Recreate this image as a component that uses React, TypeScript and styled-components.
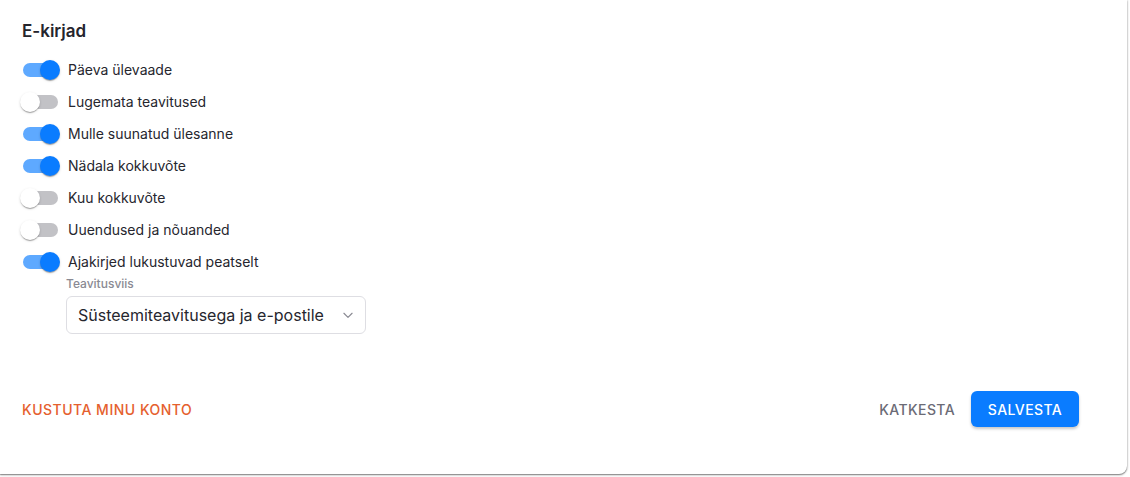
import React, { useState } from "react";
import styled, { createGlobalStyle } from "styled-components";

const Global = createGlobalStyle`
  html, body { margin: 0; padding: 0; background: #ffffff; }
  body { font-family: Inter, "Noto Sans", sans-serif; color: #26262e; }
  * { box-sizing: border-box; }
`;

const Page = styled.div`
  height: 477px;
  background: #ffffff;
`;

const Card = styled.div`
  width: 1127px;
  height: 474px;
  background: #fff;
  border-bottom-right-radius: 8px;
  box-shadow: 0 1px 1px rgba(0,0,0,0.35), 0 2px 2px rgba(0,0,0,0.12), 1px 0 2px rgba(0,0,0,0.14);
  padding: 21px 22px 0 22px;
  display: flex;
  flex-direction: column;
`;

const Title = styled.h2`
  margin: 0;
  font-size: 17px;
  font-weight: 600;
  line-height: 20px;
  color: #25252d;
`;

const List = styled.div`
  margin-top: 13px;
  display: flex;
  flex-direction: column;
`;

const Row = styled.label`
  height: 32px;
  display: flex;
  align-items: center;
  gap: 8px;
  cursor: pointer;
`;

const SwitchBox = styled.span`
  position: relative;
  width: 40px;
  height: 20px;
  flex: none;
  margin-left: -2px;
`;

const Track = styled.span<{ $on: boolean }>`
  position: absolute;
  left: 3px;
  top: 3px;
  width: 35px;
  height: 14px;
  border-radius: 7px;
  background: ${(p) => (p.$on ? "#5ea9ff" : "#c2c2c6")};
`;

const Thumb = styled.span<{ $on: boolean }>`
  position: absolute;
  top: 0;
  left: ${(p) => (p.$on ? "20px" : "0px")};
  width: 20px;
  height: 20px;
  border-radius: 50%;
  background: ${(p) => (p.$on ? "#0a7cff" : "#ffffff")};
  box-shadow: 0 2px 1px -1px rgba(0,0,0,0.2), 0 1px 1px 0 rgba(0,0,0,0.14), 0 1px 3px 0 rgba(0,0,0,0.12);
`;

const Label = styled.span`
  font-size: 14px;
  line-height: 20px;
  color: #26262e;
`;

const Field = styled.div`
  margin-left: 44px;
  margin-top: -1px;
  display: flex;
  flex-direction: column;
  width: 300px;
`;

const FieldLabel = styled.span`
  font-size: 12px;
  font-weight: 500;
  color: #8a8a93;
  line-height: 14px;
  margin-bottom: 5px;
`;

const Select = styled.div`
  height: 38px;
  border: 1px solid #dedee3;
  border-radius: 6px;
  display: flex;
  align-items: center;
  justify-content: space-between;
  padding: 0 10px 0 11px;
  font-size: 16px;
  color: #26262e;
`;

const Footer = styled.div`
  margin-top: 57px;
  display: flex;
  align-items: center;
  justify-content: space-between;
  padding-right: 26px;
`;

const DangerButton = styled.button`
  background: none;
  border: none;
  padding: 0;
  font-family: inherit;
  font-size: 14px;
  font-weight: 500;
  letter-spacing: 0.5px;
  color: #e5602e;
  cursor: pointer;
`;

const Actions = styled.div`
  display: flex;
  align-items: center;
  gap: 16px;
`;

const TextButton = styled.button`
  background: none;
  border: none;
  padding: 0 0;
  font-family: inherit;
  font-size: 14px;
  font-weight: 500;
  letter-spacing: 0.4px;
  color: #6b6b76;
  cursor: pointer;
`;

const PrimaryButton = styled.button`
  height: 36px;
  width: 108px;
  border: none;
  border-radius: 6px;
  background: #0a7cff;
  color: #fff;
  font-family: inherit;
  font-size: 14px;
  font-weight: 500;
  letter-spacing: 0.4px;
  box-shadow: 0 2px 3px rgba(0,0,0,0.22);
  cursor: pointer;
`;

const items: [string, boolean][] = [
  ["Päeva ülevaade", true],
  ["Lugemata teavitused", false],
  ["Mulle suunatud ülesanne", true],
  ["Nädala kokkuvõte", true],
  ["Kuu kokkuvõte", false],
  ["Uuendused ja nõuanded", false],
  ["Ajakirjed lukustuvad peatselt", true],
];

export default function App() {
  const [state, setState] = useState(items.map((i) => i[1]));
  return (
    <Page>
      <Global />
      <Card>
        <Title>E-kirjad</Title>
        <List>
          {items.map(([label], i) => (
            <Row key={label} onClick={() => setState((s) => s.map((v, j) => (j === i ? !v : v)))}>
              <SwitchBox>
                <Track $on={state[i]} />
                <Thumb $on={state[i]} />
              </SwitchBox>
              <Label>{label}</Label>
            </Row>
          ))}
        </List>
        <Field>
          <FieldLabel>Teavitusviis</FieldLabel>
          <Select>
            <span>Süsteemiteavitusega ja e-postile</span>
            <svg width="14" height="14" viewBox="0 0 24 24" fill="none" stroke="#8a8a93" strokeWidth="2" strokeLinecap="round" strokeLinejoin="round">
              <path d="M5 9l7 7 7-7" />
            </svg>
          </Select>
        </Field>
        <Footer>
          <DangerButton>KUSTUTA MINU KONTO</DangerButton>
          <Actions>
            <TextButton>KATKESTA</TextButton>
            <PrimaryButton>SALVESTA</PrimaryButton>
          </Actions>
        </Footer>
      </Card>
    </Page>
  );
}
